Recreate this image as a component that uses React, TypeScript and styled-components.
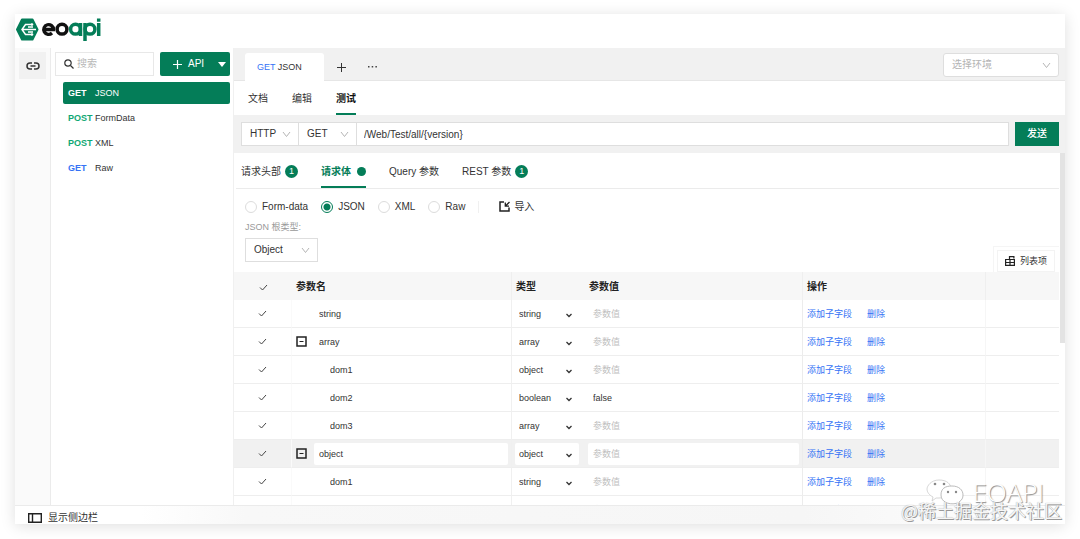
import React from "react";
import styled, { createGlobalStyle, css } from "styled-components";

const green = "#047d58";
const blue = "#3673f5";
const line = "#ebebeb";

const GlobalStyle = createGlobalStyle`
  *, *::before, *::after { box-sizing: border-box; }
  body { margin: 0; background: #fff; color: #333; }
  body, button, input, select {
    font-family: "Liberation Sans", "Noto Sans CJK SC", sans-serif;
    font-size: 10px;
    line-height: 16px;
  }
  button { padding: 0; border: 0; background: none; color: inherit; cursor: pointer; }
  svg { display: block; flex: none; }
`;

const Page = styled.div`
  height: 100vh;
  padding: 14px 15px 15px;
`;

const Window = styled.div`
  position: relative;
  height: 100%;
  display: flex;
  flex-direction: column;
  background: #fff;
  box-shadow: 0 2px 14px rgba(0, 0, 0, 0.13);
`;

const Header = styled.header`
  height: 34px;
  flex: none;
  padding: 3px 1px;
`;

const Main = styled.div`
  flex: 1;
  min-height: 0;
  display: flex;
`;

const Rail = styled.nav`
  width: 36px;
  flex: none;
  padding: 4px;
  background: #fafafa;
  border-right: 1px solid ${line};
`;

const RailButton = styled.button`
  width: 27px;
  height: 27px;
  display: grid;
  place-items: center;
  background: #f1f1f1;
`;

const Sidebar = styled.aside`
  width: 183px;
  flex: none;
  padding: 4px 3px 0 4px;
  border-right: 1px solid #f0f0f0;
`;

const SidebarTools = styled.div`
  display: flex;
  gap: 6px;
`;

const Search = styled.label`
  flex: 1;
  min-width: 0;
  height: 24px;
  display: flex;
  align-items: center;
  gap: 3px;
  padding-left: 8px;
  border: 1px solid #e8e8e8;
`;

const SearchInput = styled.input`
  width: 100%;
  min-width: 0;
  padding: 0;
  border: 0;
  outline: 0;
  &::placeholder { color: #b8b8b8; }
`;

const AddApi = styled.button`
  width: 70px;
  height: 24px;
  display: flex;
  align-items: center;
  padding: 0 4px 0 13px;
  border-radius: 2px;
  background: ${green};
  color: #fff;
`;

const AddText = styled.span`
  flex: 1;
  padding-left: 6px;
  text-align: left;
`;

const ApiList = styled.ul`
  margin: 6px 0 0 8px;
  padding: 0;
  list-style: none;
  display: grid;
  gap: 3px;
`;

const ApiItem = styled.a<{ $active?: boolean }>`
  height: 22px;
  display: flex;
  align-items: center;
  padding-left: 5px;
  border-radius: 2px;
  font-size: 9px;
  color: ${(p) => (p.$active ? "#fff" : "#333")};
  background: ${(p) => (p.$active ? green : "transparent")};
  text-decoration: none;
`;

const Method = styled.b<{ $color: string }>`
  width: 27px;
  color: ${(p) => p.$color};
`;

const Content = styled.main`
  flex: 1;
  min-width: 0;
  display: flex;
  flex-direction: column;
`;

const TabBar = styled.div`
  height: 33px;
  flex: none;
  display: flex;
  padding: 5px 6px 0 11px;
  background: #f1f1f1;
  box-shadow: inset 0 -1px #e6e6e6;
`;

const FileTab = styled.button`
  width: 79px;
  padding-left: 12px;
  border-radius: 3px 3px 0 0;
  background: #fff;
  text-align: left;
  font-size: 9px;
`;

const MethodText = styled.span`
  color: ${blue};
`;

const TabActions = styled.div`
  display: flex;
  padding-left: 2px;
`;

const TabAction = styled.button`
  width: 31px;
  display: grid;
  place-items: center;
`;

const SelectShell = styled.span<{ $width: number; $push?: boolean; $round?: boolean }>`
  position: relative;
  width: ${(p) => p.$width}px;
  height: 24px;
  flex: none;
  display: block;
  border: 1px solid #dedede;
  border-radius: ${(p) => (p.$round ? 3 : 0)}px;
  background: #fff;
  margin-left: ${(p) => (p.$push ? "auto" : 0)};
  & + & { border-left: 0; }
`;

const SelectBox = styled.select<{ $muted?: boolean }>`
  appearance: none;
  display: block;
  width: 100%;
  height: 100%;
  padding: 0 8px;
  border: 0;
  outline: 0;
  background: transparent;
  color: ${(p) => (p.$muted ? "#b4b4b4" : "#333")};
`;

const SelectArrow = styled.svg`
  position: absolute;
  right: 7px;
  top: 7px;
  pointer-events: none;
`;

const ViewTabs = styled.nav`
  height: 34px;
  flex: none;
  display: flex;
  gap: 24px;
  padding-left: 14px;
`;

const ViewTab = styled.a<{ $active?: boolean }>`
  display: flex;
  align-items: center;
  padding-top: 3px;
  border-bottom: 2px solid ${(p) => (p.$active ? green : "transparent")};
  color: ${(p) => (p.$active ? "#111" : "#333")};
  font-weight: ${(p) => (p.$active ? 700 : 400)};
  text-decoration: none;
`;

const UrlBar = styled.form`
  height: 38px;
  flex: none;
  display: flex;
  align-items: center;
  padding: 0 6px 0 7px;
  background: #f1f1f1;
`;

const UrlInput = styled.input`
  flex: 1;
  min-width: 0;
  height: 24px;
  padding: 0 7px;
  border: 1px solid #dedede;
  border-left: 0;
  outline: 0;
  color: #333;
`;

const Send = styled.button`
  width: 44px;
  height: 24px;
  margin-left: 6px;
  background: ${green};
  color: #fff;
  font-weight: 500;
`;

const Panel = styled.section`
  position: relative;
  flex: 1;
  min-height: 0;
  overflow: hidden;
  padding-right: 6px;
`;

const ScrollThumb = styled.div`
  position: absolute;
  top: 0;
  right: 0;
  width: 5px;
  height: 54%;
  background: #e3e3e3;
`;

const RequestTabs = styled.nav`
  height: 36px;
  display: flex;
  gap: 23px;
  margin-left: 2px;
  padding-left: 5px;
  border-bottom: 1px solid ${line};
`;

const RequestTab = styled.a<{ $active?: boolean }>`
  display: flex;
  align-items: center;
  gap: ${(p) => (p.$active ? 6 : 4)}px;
  padding-top: 4px;
  border-bottom: 2px solid ${(p) => (p.$active ? green : "transparent")};
  color: ${(p) => (p.$active ? green : "#333")};
  font-weight: ${(p) => (p.$active ? 700 : 400)};
  text-decoration: none;
`;

const Count = styled.span`
  width: 13px;
  height: 13px;
  border-radius: 50%;
  background: ${green};
  color: #fff;
  font-size: 9px;
  line-height: 13px;
  text-align: center;
`;

const Dot = styled.span`
  width: 9px;
  height: 9px;
  border-radius: 50%;
  background: ${green};
`;

const Formats = styled.div`
  height: 32px;
  display: flex;
  align-items: center;
  gap: 13px;
  padding: 3px 0 0 11px;
`;

const Format = styled.label`
  display: flex;
  align-items: center;
  gap: 5px;
`;

const Radio = styled.input`
  appearance: none;
  width: 12px;
  height: 12px;
  margin: 0;
  border: 1px solid #dcdcdc;
  border-radius: 50%;
  &:checked {
    border-color: ${green};
    background: radial-gradient(circle, ${green} 3px, transparent 4px);
  }
`;

const Import = styled.button`
  display: flex;
  align-items: center;
  gap: 4px;
  padding-left: 20px;
  border-left: 1px solid #f0f0f0;
  height: 12px;
`;

const RootRow = styled.div`
  height: 51px;
  display: flex;
  justify-content: space-between;
  align-items: flex-end;
  padding-left: 11px;
`;

const RootType = styled.label`
  align-self: flex-start;
  display: grid;
  gap: 5px;
  font-size: 9px;
  line-height: 12px;
  color: #999;
`;

const ListButtonFrame = styled.div`
  padding: 3px 4px 0 3px;
  border: 1px solid #f5f5f5;
  border-width: 1px 0 0 1px;
`;

const ListButton = styled.button`
  width: 58px;
  height: 22px;
  display: flex;
  align-items: center;
  justify-content: center;
  gap: 5px;
  border: 1px solid #f3f3f3;
  font-size: 9px;
`;

const Table = styled.table`
  width: 100%;
  table-layout: fixed;
  border-collapse: separate;
  border-spacing: 0;
  font-size: 9px;
`;

const HeadCell = styled.th<{ $ruled?: boolean }>`
  height: 28px;
  padding: 2px 4px 0;
  background: #f7f7f7;
  border-right: ${(p) => (p.$ruled ? "1px solid #efefef" : "0")};
  color: #222;
  font-size: 10px;
  text-align: left;
`;

const Row = styled.tr<{ $active?: boolean }>`
  background: ${(p) => (p.$active ? "#f1f1f1" : "transparent")};
`;

const Cell = styled.td<{ $rule?: string }>`
  height: 28px;
  padding: 0 3px;
  border-bottom: 1px solid #eeeeee;
  border-right: ${(p) => (p.$rule ? `1px solid ${p.$rule}` : "0")};
`;

const Tick = styled.label`
  display: grid;
  place-items: center;
`;

const TickInput = styled.input`
  grid-area: 1 / 1;
  appearance: none;
  width: 10px;
  height: 10px;
  margin: 0;
`;

const TickMark = styled.svg`
  grid-area: 1 / 1;
  pointer-events: none;
`;

const NameLine = styled.div`
  display: flex;
  align-items: center;
  padding-left: 1px;
`;

const ToggleSlot = styled.span`
  width: 18px;
  flex: none;
`;

const Toggle = styled.button`
  display: block;
`;

const editable = css<{ $active?: boolean }>`
  border: 0;
  outline: 0;
  border-radius: 2px;
  height: 22px;
  color: #333;
  font-size: 9px;
  background: ${(p) => (p.$active ? "#fff" : "transparent")};
`;

const TextField = styled.input<{ $active?: boolean; $indent?: boolean }>`
  ${editable}
  width: 100%;
  min-width: 0;
  padding: 0 0 0 ${(p) => (p.$indent ? 16 : 5)}px;
  &::placeholder { color: #c0c0c0; }
`;

const TypeShell = styled.span`
  position: relative;
  display: block;
  width: 64px;
`;

const TypeSelect = styled.select<{ $active?: boolean }>`
  ${editable}
  appearance: none;
  display: block;
  width: 100%;
  padding: 0 4px;
`;

const TypeArrow = styled.svg`
  position: absolute;
  right: 7px;
  top: 9px;
  pointer-events: none;
`;

const Actions = styled.div`
  display: flex;
  gap: 15px;
  padding-left: 1px;
`;

const Action = styled.button`
  color: ${blue};
  font-size: 9px;
`;

const StatusBar = styled.footer`
  height: 19px;
  flex: none;
  display: flex;
  align-items: center;
  padding: 6px 0 0 13px;
  border-top: 1px solid ${line};
  background: linear-gradient(90deg, #fff 12%, #f8f8f8 22%, #f6f6f6 75%, #fff);
`;

const StatusButton = styled.button`
  display: flex;
  align-items: center;
  gap: 6px;
`;

const Watermark = styled.div`
  position: absolute;
  right: 3px;
  bottom: 2px;
  display: flex;
  flex-direction: column;
  align-items: flex-end;
  pointer-events: none;
`;

const Brand = styled.div`
  display: flex;
  gap: 8px;
  margin-bottom: -9px;
  padding-right: 18px;
  color: #fff;
  font: 300 26px/26px "Open Sans", sans-serif;
  text-shadow: 1px 1px 1px #888;
`;

const Credit = styled.div`
  color: #f6f6f6;
  font: 18px/24px "Noto Sans CJK SC", sans-serif;
  text-shadow: 1px 1px 0 #999, 0 0 1px #999;
`;

function Logo() {
  return (
    <svg width="88" height="28" viewBox="0 0 88 28" role="img" aria-label="eoapi">
      <path d="M6 2.500h10.500l5 10-5 10H6l-5-10z" fill={green} stroke={green} strokeWidth="2" strokeLinejoin="round" />
      <path d="M16 7.500H9.500L6 12.500l3.500 5H16M6 12.500h14M12 10h5M12 15h5" fill="none" stroke="#fff" strokeWidth="1.500" />
      <circle cx="16" cy="7.500" r="1.300" fill="#fff" />
      <circle cx="16" cy="17.500" r="1.300" fill="#fff" />
      <g fill="none" strokeWidth="3.500">
        <path d="M28 12.500H37.500A4.900 4.900 0 1 0 36 16" stroke="#111" strokeWidth="3.300" />
        <circle cx="46" cy="12.200" r="4.900" stroke="#111" />
        <circle cx="59.500" cy="12.200" r="4.900" stroke={green} />
        <path d="M64.500 6v13M69 6v18" stroke={green} />
        <circle cx="74" cy="12.200" r="4.900" stroke={green} />
        <path d="M82.700 6v13M82.700 1.500v3.200" stroke={green} />
      </g>
    </svg>
  );
}

function Chevron() {
  return (
    <SelectArrow width="9" height="9" viewBox="0 0 9 9" fill="none" stroke="#b5b5b5">
      <path d="M1 2l3.500 4.500L8 2" />
    </SelectArrow>
  );
}

function Picker({ label, options, width, muted, push, round }: {
  label: string; options: string[]; width: number; muted?: boolean; push?: boolean; round?: boolean;
}) {
  return (
    <SelectShell $width={width} $push={push} $round={round}>
      <SelectBox aria-label={label} $muted={muted}>
        {options.map((o) => <option key={o}>{o}</option>)}
      </SelectBox>
      <Chevron />
    </SelectShell>
  );
}

function CheckBox({ label }: { label: string }) {
  return (
    <Tick>
      <TickInput type="checkbox" defaultChecked aria-label={label} />
      <TickMark width="9" height="9" viewBox="0 0 9 9" fill="none" stroke="#444">
        <path d="M1 4.500l2.500 2.500L8 2" />
      </TickMark>
    </Tick>
  );
}

const apis = [
  { method: "GET", name: "JSON", color: "#fff", active: true },
  { method: "POST", name: "FormData", color: "#10a874" },
  { method: "POST", name: "XML", color: "#10a874" },
  { method: "GET", name: "Raw", color: blue },
];

type Param = { name: string; type: string; value?: string; child?: boolean; open?: boolean; active?: boolean };

const params: Param[] = [
  { name: "string", type: "string" },
  { name: "array", type: "array", open: true },
  { name: "dom1", type: "object", child: true },
  { name: "dom2", type: "boolean", value: "false", child: true },
  { name: "dom3", type: "array", child: true },
  { name: "object", type: "object", open: true, active: true },
  { name: "dom1", type: "string", child: true },
  { name: "dom2", type: "string", child: true },
];

function ParamRow({ param }: { param: Param }) {
  const { name, type, value, child, open, active } = param;
  return (
    <Row $active={active}>
      <Cell $rule="#fafafa"><CheckBox label={name} /></Cell>
      <Cell $rule="#f0f0f0">
        <NameLine>
          <ToggleSlot>
            {open && (
              <Toggle aria-label="折叠">
                <svg width="11" height="11" viewBox="0 0 11 11" fill="none" stroke="#222">
                  <path d="M1 1h9v9H1z" strokeWidth="1.500" />
                  <path d="M3.500 5.500h4" />
                </svg>
              </Toggle>
            )}
          </ToggleSlot>
          <TextField aria-label="参数名" defaultValue={name} $active={active} $indent={child} />
        </NameLine>
      </Cell>
      <Cell>
        <TypeShell>
          <TypeSelect aria-label="类型" $active={active} defaultValue={type}>
            {["string", "array", "object", "boolean"].map((t) => <option key={t}>{t}</option>)}
          </TypeSelect>
          <TypeArrow width="6" height="6" viewBox="0 0 6 6" fill="none" stroke="#333" strokeWidth="1.300">
            <path d="M.5 2L3 4.500 5.500 2" />
          </TypeArrow>
        </TypeShell>
      </Cell>
      <Cell $rule="#ececec">
        <TextField aria-label="参数值" placeholder="参数值" defaultValue={value} $active={active} />
      </Cell>
      <Cell $rule="#f6f6f6">
        <Actions>
          <Action>添加子字段</Action>
          <Action>删除</Action>
        </Actions>
      </Cell>
      <Cell />
    </Row>
  );
}

export default function App() {
  return (
    <Page>
      <GlobalStyle />
      <Window>
        <Header><Logo /></Header>
        <Main>
          <Rail>
            <RailButton aria-label="API">
              <svg width="14" height="8" viewBox="0 0 14 8" fill="none" stroke="#333" strokeWidth="1.500">
                <path d="M6 1H4a3 3 0 0 0 0 6h2M8 1h2a3 3 0 0 1 0 6H8M4.500 4h5" />
              </svg>
            </RailButton>
          </Rail>
          <Sidebar>
            <SidebarTools>
              <Search>
                <svg width="10" height="10" viewBox="0 0 10 10" fill="none" stroke="#333" strokeWidth="1.200">
                  <circle cx="4" cy="4" r="3.200" />
                  <path d="M6.500 6.500L9.500 9.500" />
                </svg>
                <SearchInput aria-label="搜索" placeholder="搜索" />
              </Search>
              <AddApi>
                <svg width="9" height="9" viewBox="0 0 9 9" stroke="#fff" strokeWidth="1.200"><path d="M4.500 0v9M0 4.500h9" /></svg>
                <AddText>API</AddText>
                <svg width="8" height="5" viewBox="0 0 8 5" fill="#fff"><path d="M0 0h8L4 5z" /></svg>
              </AddApi>
            </SidebarTools>
            <ApiList>
              {apis.map((a) => (
                <li key={a.method + a.name}>
                  <ApiItem href="#" $active={a.active}>
                    <Method $color={a.color}>{a.method}</Method>
                    {a.name}
                  </ApiItem>
                </li>
              ))}
            </ApiList>
          </Sidebar>
          <Content>
            <TabBar>
              <FileTab><MethodText>GET</MethodText> JSON</FileTab>
              <TabActions>
                <TabAction aria-label="新建">
                  <svg width="9" height="9" viewBox="0 0 9 9" stroke="#333"><path d="M4.500 0v9M0 4.500h9" /></svg>
                </TabAction>
                <TabAction aria-label="更多">
                  <svg width="9" height="2" viewBox="0 0 9 2" fill="#444"><path d="M0 0h1.500v1.500H0zM3.700 0h1.500v1.500H3.700zM7.400 0h1.500v1.500H7.400z" /></svg>
                </TabAction>
              </TabActions>
              <Picker label="环境" options={["选择环境"]} width={116} muted push round />
            </TabBar>
            <ViewTabs>
              <ViewTab href="#">文档</ViewTab>
              <ViewTab href="#">编辑</ViewTab>
              <ViewTab href="#" $active>测试</ViewTab>
            </ViewTabs>
            <UrlBar>
              <Picker label="协议" options={["HTTP", "HTTPS"]} width={58} />
              <Picker label="请求方式" options={["GET", "POST"]} width={58} />
              <UrlInput aria-label="URL" defaultValue="/Web/Test/all/{version}" />
              <Send type="button">发送</Send>
            </UrlBar>
            <Panel>
              <RequestTabs>
                <RequestTab href="#">请求头部<Count>1</Count></RequestTab>
                <RequestTab href="#" $active>请求体<Dot /></RequestTab>
                <RequestTab href="#">Query 参数</RequestTab>
                <RequestTab href="#">REST 参数<Count>1</Count></RequestTab>
              </RequestTabs>
              <Formats>
                {["Form-data", "JSON", "XML", "Raw"].map((f) => (
                  <Format key={f}>
                    <Radio type="radio" name="format" defaultChecked={f === "JSON"} />
                    {f}
                  </Format>
                ))}
                <Import>
                  <svg width="11" height="11" viewBox="0 0 11 11" fill="none" stroke="#222" strokeWidth="1.500">
                    <path d="M5 1H1v9h9V6.500" />
                    <path d="M10.500 1L7 4.500M6.300 1.500v3.700H10" strokeWidth="1.300" />
                  </svg>
                  导入
                </Import>
              </Formats>
              <RootRow>
                <RootType>
                  JSON 根类型:
                  <Picker label="JSON 根类型" options={["Object", "Array"]} width={73} />
                </RootType>
                <ListButtonFrame>
                  <ListButton>
                    <svg width="10" height="10" viewBox="0 0 10 10" fill="none" stroke="#222" strokeWidth="1.200">
                      <path d="M.6 3.500h8.800v5.900H.6zM.6 6.500h8.800M5 3.500v5.900M4.500 3V.6h4.400v1.800" />
                    </svg>
                    列表项
                  </ListButton>
                </ListButtonFrame>
              </RootRow>
              <Table>
                <colgroup>
                  <col style={{ width: "58px" }} />
                  <col style={{ width: "220px" }} />
                  <col style={{ width: "73px" }} />
                  <col />
                  <col style={{ width: "183px" }} />
                  <col style={{ width: "73px" }} />
                </colgroup>
                <thead>
                  <tr>
                    <HeadCell><CheckBox label="全选" /></HeadCell>
                    <HeadCell $ruled>参数名</HeadCell>
                    <HeadCell>类型</HeadCell>
                    <HeadCell $ruled>参数值</HeadCell>
                    <HeadCell $ruled>操作</HeadCell>
                    <HeadCell />
                  </tr>
                </thead>
                <tbody>
                  {params.map((p, i) => <ParamRow key={i} param={p} />)}
                </tbody>
              </Table>
              <ScrollThumb />
            </Panel>
          </Content>
        </Main>
        <StatusBar>
          <StatusButton>
            <svg width="14" height="10" viewBox="0 0 14 10" fill="none" stroke="#222" strokeWidth="1.400">
              <path d="M.7.7h12.600v8.600H.7zM4.500.7v8.600" />
            </svg>
            显示侧边栏
          </StatusButton>
        </StatusBar>
        <Watermark>
          <Brand>
            <svg width="38" height="28" viewBox="0 0 38 28" fill="#fff" stroke="#aaa" strokeWidth="0.800">
              <path d="M13 1c8 0 12 4 12 9s-4 9-12 9l-3 0-4 3 1-4C3 16 1 13 1 10s4-9 12-9z" stroke="#ccc" />
              <path d="M26 7c7 0 11 4 11 9 0 3-1 5-4 7l1 4-4-2.500c-8 1.500-15-2-15-8.500s4-9 11-9z" />
              <g fill="#888" stroke="none">
                <circle cx="9" cy="5" r="1.300" /><circle cx="18" cy="5" r="1.300" />
                <circle cx="22" cy="13" r="1.200" /><circle cx="30" cy="13" r="1.200" />
              </g>
            </svg>
            EOAPI
          </Brand>
          <Credit>@稀土掘金技术社区</Credit>
        </Watermark>
      </Window>
    </Page>
  );
}
